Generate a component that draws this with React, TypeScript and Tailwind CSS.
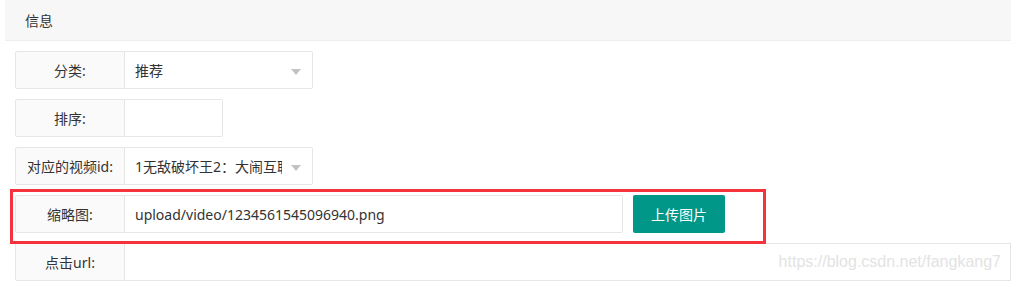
const font = { fontFamily: '"Noto Sans", "Noto Sans CJK SC", sans-serif' };

const Arrow = () => (
    <span className="absolute right-[11px] top-[17px] w-0 h-0 border-x-[5px] border-x-transparent border-t-[6px] border-t-[#c2c2c2]" />
);

const Row = ({ label, children }: { label: string; children: React.ReactNode }) => (
    <div className="flex h-[38px] mb-[10px]">
        <div className="w-[110px] shrink-0 flex items-center justify-center bg-[#fafafa] border border-[#e6e6e6] rounded-l-[2px] text-[14px] text-[#333]">
            {label}
        </div>
        {children}
    </div>
);

const App = () => {
    return (
        <div className="w-[1011px] h-[282px] overflow-hidden bg-white text-[#333]" style={font}>
            <div className="ml-[5px] relative">
                <div className="h-[41px] bg-[#f7f7f7] border-b border-[#eeeeee] flex items-center pl-[20px] text-[14px]">
                    信息
                </div>
                <div className="pt-[10px] pl-[10px]">
                    <Row label="分类:">
                        <div className="relative w-[188px] border border-l-0 border-[#e6e6e6] rounded-r-[2px] flex items-center pl-[10px] text-[14px]">
                            推荐
                            <Arrow />
                        </div>
                    </Row>
                    <Row label="排序:">
                        <div className="w-[98px] border border-l-0 border-[#e6e6e6] rounded-r-[2px]" />
                    </Row>
                    <Row label="对应的视频id:">
                        <div className="relative w-[188px] border border-l-0 border-[#e6e6e6] rounded-r-[2px] flex items-center pl-[10px] pr-[30px] text-[14px] overflow-hidden">
                            <span className="whitespace-nowrap overflow-hidden">1无敌破坏王2：大闹互联网</span>
                            <Arrow />
                        </div>
                    </Row>
                    <Row label="缩略图:">
                        <div className="w-[498px] border border-l-0 border-[#e6e6e6] rounded-r-[2px] flex items-center pl-[10px] text-[14px]">
                            upload/video/1234561545096940.png
                        </div>
                        <button className="ml-[10px] w-[92px] bg-[#009688] text-white text-[14px] rounded-[2px]">
                            上传图片
                        </button>
                    </Row>
                    <Row label="点击url:">
                        <div className="flex-1 border border-l-0 border-[#e6e6e6] flex items-center justify-end pr-[9px]">
                            <span className="text-[16px] text-[#e3e3e3]" style={{ fontFamily: '"Liberation Sans", Arial, sans-serif' }}>
                                https://blog.csdn.net/fangkang7
                            </span>
                        </div>
                    </Row>
                </div>
                <div className="absolute left-[5px] top-[189px] w-[756px] h-[55px] border-[3px] border-[#f4333c] pointer-events-none" />
            </div>
        </div>
    );
};

export default App;
